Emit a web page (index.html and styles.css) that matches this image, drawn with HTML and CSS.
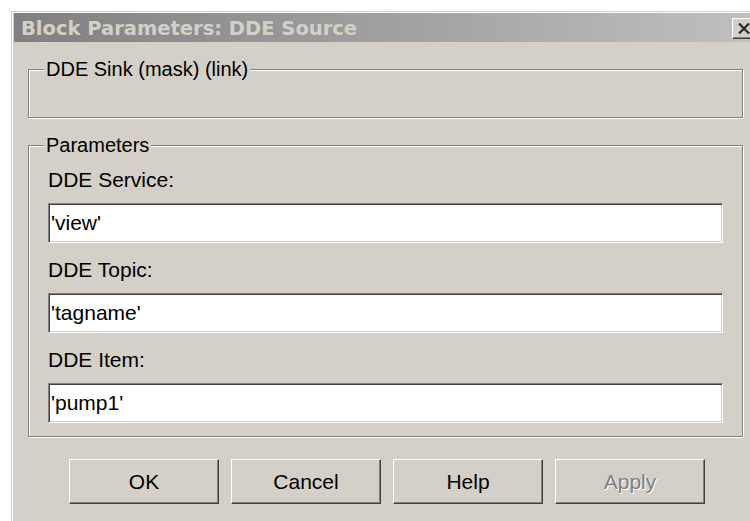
FILE: index.html
```html
<!DOCTYPE html>
<html lang="en">
<head>
<meta charset="utf-8">
<title>Block Parameters: DDE Source</title>
<link rel="stylesheet" href="styles.css">
</head>
<body>
<div class="window">
  <div class="titlebar">
    <span class="title">Block Parameters: DDE Source</span>
    <button class="close" type="button" aria-label="Close">
      <svg width="12" height="11" viewBox="0 0 12 11"><path d="M1 0.5 L11 10.5 M11 0.5 L1 10.5" stroke="#2a2a2a" stroke-width="2.2" fill="none"/></svg>
    </button>
  </div>
  <fieldset class="group group-desc">
    <legend>DDE Sink (mask) (link)</legend>
    <div class="desc"></div>
  </fieldset>
  <fieldset class="group group-params">
    <legend>Parameters</legend>
    <div class="field">
      <label for="svc">DDE Service:</label>
      <input id="svc" type="text" value="'view'">
    </div>
    <div class="field">
      <label for="topic">DDE Topic:</label>
      <input id="topic" type="text" value="'tagname'">
    </div>
    <div class="field">
      <label for="item">DDE Item:</label>
      <input id="item" type="text" value="'pump1'">
    </div>
  </fieldset>
  <div class="buttons">
    <button type="button" class="btn">OK</button>
    <button type="button" class="btn">Cancel</button>
    <button type="button" class="btn">Help</button>
    <button type="button" class="btn" disabled>Apply</button>
  </div>
</div>
</body>
</html>
```
FILE: styles.css
```css
html, body {
  margin: 0;
  overflow: hidden;
  background: #fff;
}

body {
  font-family: "Liberation Sans", Arial, sans-serif;
  color: #000;
}

/* dialog frame, runs past the right edge of the view */
.window {
  margin: 11px 0 0 11px;
  width: 743px;
  height: 520px;
  padding: 1px 2px 0 2px;
  border-top: 1px solid #d4d0c8;
  border-left: 1px solid #d4d0c8;
  box-shadow: inset 1px 1px #fff;
  background: #d4d0c8;
}

/* inactive caption */
.titlebar {
  display: flex;
  align-items: center;
  justify-content: space-between;
  height: 29px;
  padding: 0 1px 0 7px;
  background: linear-gradient(to right, #808080, #c0c0c0);
}

.title {
  font-family: "DejaVu Sans", sans-serif;
  font-weight: bold;
  font-size: 19.5px;
  line-height: 29px;
  padding-top: 2px;
  color: #d4d0c8;
  white-space: nowrap;
}

.close {
  display: flex;
  align-items: center;
  justify-content: center;
  width: 24px;
  height: 21px;
  margin-top: 1px;
  padding: 0;
  background: #d4d0c8;
  border: 1px solid;
  border-color: #fff #404040 #404040 #fff;
  box-shadow: inset -1px -1px #808080;
}

/* etched group boxes */
.group {
  margin: 15px 14px 0;
  padding: 0 19px 13px;
  border: 1px solid #808080;
  box-shadow: inset 1px 1px #fff, 1px 1px #fff;
}

.group legend {
  font-size: 20px;
  line-height: 24px;
  padding: 0 2px;
  margin-left: -4px;
  background: #d4d0c8;
}

.group-desc {
  padding-bottom: 0;
}

.desc {
  height: 36px;
}

.group-params {
  padding-top: 10px;
}

.field label {
  display: block;
  font-size: 21px;
  line-height: 26px;
  margin-bottom: 10px;
}

.field + .field {
  margin-top: 14px;
}

/* sunken edit boxes */
.field input {
  display: block;
  box-sizing: border-box;
  width: 100%;
  height: 40px;
  margin: 0;
  padding: 0 2px;
  font-family: "Liberation Sans", Arial, sans-serif;
  font-size: 21px;
  color: #000;
  background: #fff;
  border: 1px solid;
  border-color: #808080 #fff #fff #808080;
  box-shadow: inset 1px 1px #404040, inset -1px -1px #d4d0c8;
  outline: none;
}

.buttons {
  display: flex;
  gap: 12px;
  margin: 22px 0 0 55px;
}

/* raised push buttons */
.btn {
  box-sizing: border-box;
  width: 150px;
  height: 45px;
  padding: 0;
  font-family: "Liberation Sans", Arial, sans-serif;
  font-size: 21px;
  color: #000;
  background: #d4d0c8;
  border: 1px solid;
  border-color: #fff #404040 #404040 #fff;
  box-shadow: inset -1px -1px #808080;
}

.btn:disabled {
  color: #808080;
  text-shadow: 1px 1px #fff;
}
```
